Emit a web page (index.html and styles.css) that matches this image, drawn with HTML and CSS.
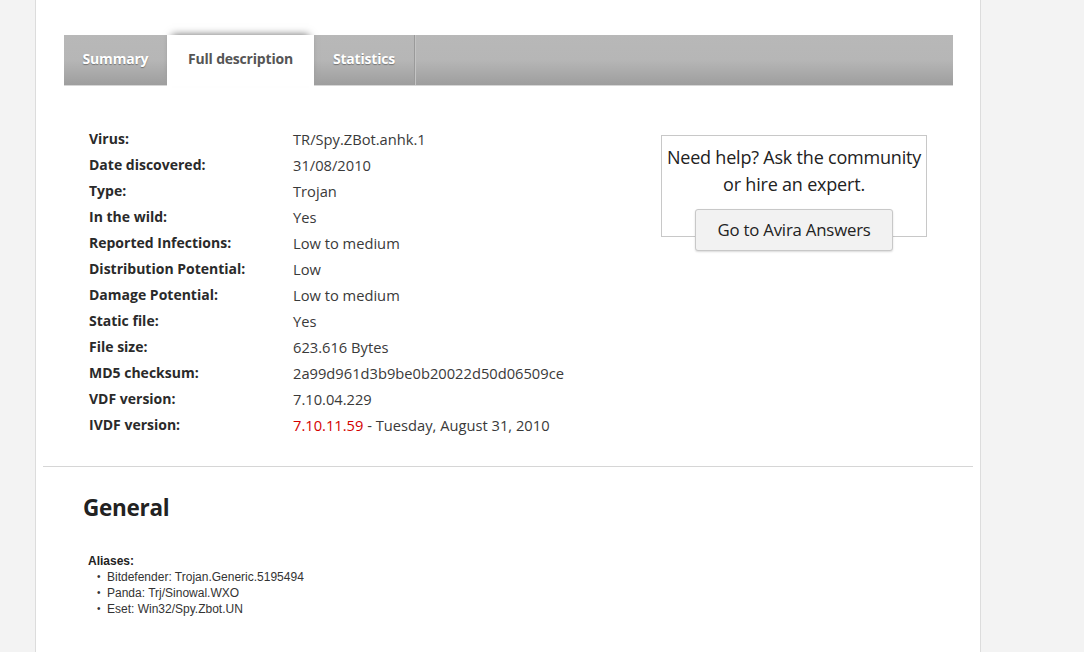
FILE: index.html
```html
<!DOCTYPE html>
<html>
<head>
<meta charset="utf-8">
<link rel="stylesheet" href="styles.css">
</head>
<body>
<div class="page">
  <div class="tabs">
    <div class="tab">Summary</div>
    <div class="tab active">Full description</div>
    <div class="tab">Statistics</div>
    <div class="tab-rest"></div>
  </div>

  <div class="details">
    <div class="info">
      <div class="row"><span class="label">Virus:</span><span class="value">TR/Spy.ZBot.anhk.1</span></div>
      <div class="row"><span class="label">Date discovered:</span><span class="value">31/08/2010</span></div>
      <div class="row"><span class="label">Type:</span><span class="value">Trojan</span></div>
      <div class="row"><span class="label">In the wild:</span><span class="value">Yes</span></div>
      <div class="row"><span class="label">Reported Infections:</span><span class="value">Low to medium</span></div>
      <div class="row"><span class="label">Distribution Potential:</span><span class="value">Low</span></div>
      <div class="row"><span class="label">Damage Potential:</span><span class="value">Low to medium</span></div>
      <div class="row"><span class="label">Static file:</span><span class="value">Yes</span></div>
      <div class="row"><span class="label">File size:</span><span class="value">623.616 Bytes</span></div>
      <div class="row"><span class="label">MD5 checksum:</span><span class="value">2a99d961d3b9be0b20022d50d06509ce</span></div>
      <div class="row"><span class="label">VDF version:</span><span class="value">7.10.04.229</span></div>
      <div class="row"><span class="label">IVDF version:</span><span class="value"><span class="red">7.10.11.59</span> - Tuesday, August 31, 2010</span></div>
    </div>
    <div class="help">
      <p class="help-text">Need help? Ask the community or hire an expert.</p>
      <div class="help-btn">Go to Avira Answers</div>
    </div>
  </div>

  <div class="divider"></div>

  <div class="general">
    <h2>General</h2>
    <div class="aliases">
      <div class="sub">Aliases:</div>
      <ul>
        <li>Bitdefender: Trojan.Generic.5195494</li>
        <li>Panda: Trj/Sinowal.WXO</li>
        <li>Eset: Win32/Spy.Zbot.UN</li>
      </ul>
      <div class="sub next">Platforms / OS:</div>
    </div>
  </div>
</div>
</body>
</html>
```

FILE: styles.css
```css
html, body {
  margin: 0;
  padding: 0;
  height: 100%;
  overflow: hidden;
}
body {
  background: #f3f3f3;
  font-family: "Open Sans", "Noto Sans", sans-serif;
  color: #333;
}
.page {
  margin-left: 35px;
  width: 944px;
  min-height: 100%;
  background: #fff;
  border-left: 1px solid #dcdcdc;
  border-right: 1px solid #dcdcdc;
  padding-top: 35px;
  box-sizing: content-box;
}
.tabs {
  display: flex;
  margin: 0 27px 0 28px;
  height: 50px;
  background: linear-gradient(#b8b8b8 0%, #b6b6b6 50%, #9e9e9e 100%);
  border-bottom: 1px solid #d6d6d6;
}
.tab {
  display: flex;
  align-items: center;
  justify-content: center;
  padding-bottom: 3px;
  box-sizing: border-box;
  font-size: 14px;
  font-weight: 700;
  color: #fff;
  text-shadow: 0 1px 1px rgba(0,0,0,0.35);
  border-right: 1px solid #9a9a9a;
  box-shadow: 1px 0 0 #c4c4c4;
  letter-spacing: -0.2px;
}
.tab:nth-child(1) { width: 104px; }
.tab:nth-child(3) { width: 101px; }
.tab.active {
  width: 147px;
  background: #fff;
  color: #555;
  text-shadow: none;
  border-right: none;
  box-shadow: 0 -5px 8px -5px rgba(0,0,0,0.6);
  height: 51px;
  padding-bottom: 4px;
  margin-left: -1px;
}
.tab-rest { flex: 1; }

.details {
  display: flex;
  padding: 40px 53px 0 53px;
  justify-content: space-between;
}
.info {
  font-size: 14px;
}
.row {
  display: flex;
  height: 26px;
  line-height: 26px;
}
.label {
  width: 204px;
  font-weight: 700;
  color: #2a2a2a;
}
.value {
  color: #3a3a3a;
  font-size: 14.7px;
}
.red { color: #d40000; }

.help {
  width: 264px;
  height: 100px;
  border: 1px solid #c8c8c8;
  margin-top: 9px;
  text-align: center;
  display: flex;
  flex-direction: column;
  align-items: center;
}
.help-text {
  margin: 8px 0 0;
  font-size: 18px;
  line-height: 27px;
  color: #222;
  letter-spacing: -0.2px;
}
.help-btn {
  margin-top: 11px;
  width: 196px;
  height: 40px;
  line-height: 40px;
  background: #f2f2f2;
  border: 1px solid #c8c8c8;
  border-radius: 3px;
  box-shadow: 0 1px 2px rgba(0,0,0,0.15);
  font-size: 16.8px;
  color: #222;
  letter-spacing: -0.2px;
}

.divider {
  margin: 28px 7px 0 7px;
  border-top: 1px solid #d6d6d6;
}

.general {
  padding: 26px 0 0 47px;
}
.general h2 {
  margin: 0;
  font-size: 22.5px;
  font-weight: 700;
  color: #222;
  letter-spacing: -0.3px;
  line-height: 30px;
}
.aliases {
  padding: 30px 0 0 5px;
}
.sub {
  font-family: "Liberation Sans", Arial, sans-serif;
  font-weight: 700;
  font-size: 12px;
  color: #222;
  line-height: 16px;
}
.sub.next { margin-top: 34px; }
.aliases ul {
  margin: 0;
  padding: 0 0 0 14px;
  list-style: none;
}
.aliases li {
  font-family: "Liberation Sans", Arial, sans-serif;
  font-size: 12px;
  line-height: 16px;
  color: #333;
  position: relative;
  padding-left: 5px;
}
.aliases li::before {
  content: "\2022";
  position: absolute;
  left: -5px;
  font-size: 10px;
}
```
